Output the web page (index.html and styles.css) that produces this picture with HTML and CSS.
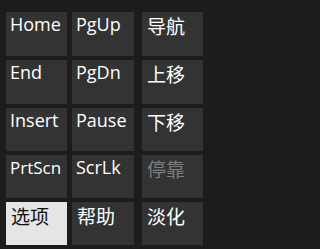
FILE: index.html
```html
<!DOCTYPE html>
<html lang="zh-CN">
<head>
<meta charset="utf-8">
<title>屏幕键盘</title>
<link rel="stylesheet" href="styles.css">
</head>
<body>
<div class="keyboard">
  <div class="group main">
    <div class="key">Home</div>
    <div class="key">PgUp</div>
    <div class="key">End</div>
    <div class="key">PgDn</div>
    <div class="key">Insert</div>
    <div class="key">Pause</div>
    <div class="key small">PrtScn</div>
    <div class="key">ScrLk</div>
    <div class="key cjk active">选项</div>
    <div class="key cjk">帮助</div>
  </div>
  <div class="group nav">
    <div class="key cjk">导航</div>
    <div class="key cjk">上移</div>
    <div class="key cjk">下移</div>
    <div class="key cjk disabled">停靠</div>
    <div class="key cjk">淡化</div>
  </div>
</div>
</body>
</html>
```
FILE: styles.css
```css
html, body {
  margin: 0;
  padding: 0;
  background: #1c1c1c;
}

body {
  width: 206px;
  height: 249px;
  overflow: hidden;
  font-family: "Open Sans", "Noto Sans CJK SC", sans-serif;
  color: #ffffff;
}

.keyboard {
  display: flex;
  gap: 8px;
  padding: 12px 0 0 6px;
}

.group {
  display: grid;
  grid-template-rows: 44px 44px 43px 43px 43px;
  row-gap: 4px;
}

.main {
  grid-template-columns: 61px 62px;
  column-gap: 5px;
}

.nav {
  grid-template-columns: 61px;
}

.key {
  background: #333333;
  font-size: 18px;
  line-height: 24px;
  padding: 0 0 0 4px;
  white-space: nowrap;
  overflow: hidden;
}

.key.small {
  font-size: 17px;
  padding-top: 1px;
}

.key.cjk {
  font-family: "Noto Sans CJK SC", sans-serif;
  font-size: 19px;
  padding-top: 2px;
  padding-left: 5px;
}

.key.active {
  background: #e5e5e5;
  color: #111111;
}

.key.disabled {
  color: #7d7d7d;
}
```
